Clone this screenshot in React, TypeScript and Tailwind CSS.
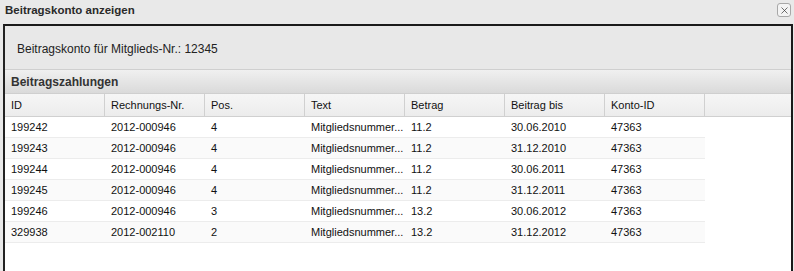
import { X } from 'lucide-react';

interface Zahlung {
  id: string;
  rechnung: string;
  pos: string;
  text: string;
  betrag: string;
  bis: string;
  konto: string;
}

const rows: Zahlung[] = [
  { id: '199242', rechnung: '2012-000946', pos: '4', text: 'Mitgliedsnummer...', betrag: '11.2', bis: '30.06.2010', konto: '47363' },
  { id: '199243', rechnung: '2012-000946', pos: '4', text: 'Mitgliedsnummer...', betrag: '11.2', bis: '31.12.2010', konto: '47363' },
  { id: '199244', rechnung: '2012-000946', pos: '4', text: 'Mitgliedsnummer...', betrag: '11.2', bis: '30.06.2011', konto: '47363' },
  { id: '199245', rechnung: '2012-000946', pos: '4', text: 'Mitgliedsnummer...', betrag: '11.2', bis: '31.12.2011', konto: '47363' },
  { id: '199246', rechnung: '2012-000946', pos: '3', text: 'Mitgliedsnummer...', betrag: '13.2', bis: '30.06.2012', konto: '47363' },
  { id: '329938', rechnung: '2012-002110', pos: '2', text: 'Mitgliedsnummer...', betrag: '13.2', bis: '31.12.2012', konto: '47363' },
];

const columns = ['ID', 'Rechnungs-Nr.', 'Pos.', 'Text', 'Betrag', 'Beitrag bis', 'Konto-ID'];

export default function App() {
  return (
    <div className="w-[794px] h-[271px] bg-[#e9e9e9] flex flex-col overflow-hidden font-['Liberation_Sans',Arial,sans-serif] text-[11px] text-[#111]">
      {/* Window title */}
      <div className="h-[24px] flex items-start justify-between pl-[5px] pr-[3px] pt-[3px]">
        <span className="font-bold text-[11.5px] text-[#2a2a2a] leading-[14px]">Beitragskonto anzeigen</span>
        <button className="w-[14px] h-[14px] border border-[#a8a8a8] rounded-[3px] bg-[#f4f4f4] flex items-center justify-center">
          <X className="w-[11px] h-[11px] text-[#333]" strokeWidth={1.5} />
        </button>
      </div>

      {/* Panel */}
      <div className="flex-1 ml-[3px] mr-[1px] border-l-2 border-t-2 border-r-2 border-l-[#222] border-t-[#1a1a1a] border-r-[#1a1a1a] flex flex-col">
        <div className="h-[44px] flex items-center pl-[12px] pt-[2px] bg-[#e8e8e8] border-b border-[#cfcfcf] text-[12px] text-[#222]">
          Beitragskonto für Mitglieds-Nr.: 12345
        </div>

        <div className="h-[24px] flex items-center pl-[6px] bg-gradient-to-b from-[#f0f0f0] to-[#dadada] font-bold text-[12px] text-[#333] border-b border-[#cfcfcf]">
          Beitragszahlungen
        </div>

        <div className="flex-1 bg-white flex flex-col">
          <div className="flex h-[23px] bg-gradient-to-b from-[#f6f6f6] to-[#ececec] border-b border-[#d0d0d0]">
            {columns.map((c) => (
              <div key={c} className="w-[100px] shrink-0 border-r border-[#d0d0d0] flex items-center pl-[6px]">
                {c}
              </div>
            ))}
            <div className="flex-1" />
          </div>

          <div className="w-[700px]">
            {rows.map((r, i) => (
              <div
                key={r.id}
                className={`flex h-[21px] items-center border-b border-[#ececec] ${i % 2 === 1 ? 'bg-[#fafafa]' : 'bg-white'}`}
              >
                {[r.id, r.rechnung, r.pos, r.text, r.betrag, r.bis, r.konto].map((v, j) => (
                  <div key={j} className="w-[100px] shrink-0 pl-[6px] whitespace-nowrap overflow-hidden">
                    {v}
                  </div>
                ))}
              </div>
            ))}
          </div>
        </div>
      </div>
    </div>
  );
}
